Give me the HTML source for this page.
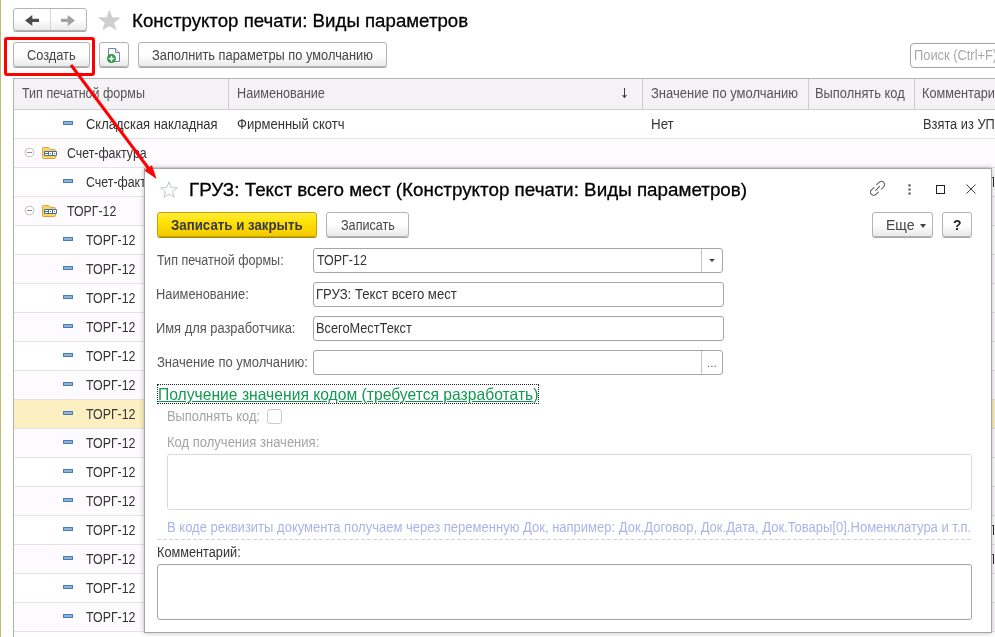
<!DOCTYPE html>
<html lang="ru"><head><meta charset="utf-8"><title>Конструктор печати: Виды параметров</title>
<style>
*{box-sizing:border-box;margin:0;padding:0}
html,body{width:995px;height:637px;overflow:hidden;background:#fff}
body{position:relative;font-family:"Liberation Sans",sans-serif;font-size:14px;color:#333}
.abs{position:absolute}
.btn{position:absolute;height:25px;border:1px solid #b3b3b3;border-radius:3px;background:linear-gradient(#fff 0%,#fff 50%,#eaeaea 100%);box-shadow:0 1px 0 #a9a9a9}
.t{position:absolute;white-space:nowrap;transform-origin:0 0}
.layer{position:absolute;left:0;top:0;width:995px;height:637px;will-change:transform}
.hl{position:absolute;height:1px;background:#e4e4e4;left:14px;width:981px}
.inp{position:absolute;height:25px;border:1px solid #a6a6a6;border-radius:3px;background:#fff}
.dash{position:absolute;width:10px;height:4px;background:#8db5dc;border:1px solid #4a7cb4;border-radius:0.5px}
</style></head><body>
<div class="abs" style="left:0;top:0;width:1px;height:637px;background:#c8b56c"></div>

<!-- nav -->
<div class="btn" style="left:13px;top:8px;width:74px;height:23px"></div>
<div class="abs" style="left:50px;top:9px;width:1px;height:21px;background:#d4d4d4"></div>
<svg class="abs" style="left:24px;top:13px" width="16" height="15" viewBox="0 0 16 15"><path d="M1 7.4 L8.3 1.9 L8.3 5.8 L15 5.8 L15 9 L8.3 9 L8.3 12.9 Z" fill="#4c4c4c"/></svg>
<svg class="abs" style="left:60px;top:13px" width="16" height="15" viewBox="0 0 16 15"><path d="M15 7.4 L7.7 1.9 L7.7 5.8 L1 5.8 L1 9 L7.7 9 L7.7 12.9 Z" fill="#a2a2a2"/></svg>
<svg class="abs" style="left:97px;top:8px" width="25" height="24" viewBox="0 0 25 24"><path d="M12.4 1.4 L15.3 9.3 L24 9.5 L17.1 14.7 L19.6 22.6 L12.4 18 L5.2 22.6 L7.7 14.7 L0.8 9.5 L9.5 9.3 Z" fill="#cfcfcf"/></svg>

<!-- toolbar -->
<div class="btn" style="left:13px;top:42px;width:77px"></div>
<div class="btn" style="left:99px;top:42px;width:30px"></div>
<svg class="abs" style="left:106px;top:46px" width="16" height="18" viewBox="0 0 16 18"><path d="M2.5 2.5 L9.5 2.5 L13.5 6.5 L13.5 15.5 L2.5 15.5 Z" fill="#fff" stroke="#6b86a6" stroke-width="1"/><path d="M9.5 2.5 L9.5 6.5 L13.5 6.5" fill="#e8eef5" stroke="#6b86a6" stroke-width="1"/><circle cx="5.5" cy="12.6" r="4.5" fill="#1f9a33"/><rect x="2.6" y="11.8" width="5.8" height="1.6" fill="#fff"/><rect x="4.7" y="9.7" width="1.6" height="5.8" fill="#fff"/></svg>
<div class="btn" style="left:138px;top:42px;width:249px"></div>
<div class="inp" style="left:910px;top:43px;width:100px;border-color:#a4a4a4;border-radius:4px"></div>

<!-- table -->
<div class="abs" style="left:13px;top:78px;width:982px;height:32px;background:#f5f2f5;border-top:1px solid #b4b4b4;border-bottom:1px solid #cfcfcf"></div>
<div class="abs" style="left:228px;top:79px;width:1px;height:30px;background:#cdcdcd"></div>
<div class="abs" style="left:642px;top:79px;width:1px;height:30px;background:#cdcdcd"></div>
<div class="abs" style="left:808px;top:79px;width:1px;height:30px;background:#cdcdcd"></div>
<div class="abs" style="left:914px;top:79px;width:1px;height:30px;background:#cdcdcd"></div>
<svg class="abs" style="left:620px;top:86px" width="10" height="14" viewBox="0 0 10 14"><path d="M4.5 2 L4.5 11" stroke="#3c3c3c" stroke-width="1" fill="none"/><path d="M1.7 8.8 L4.5 12.3 L7.3 8.8 L4.5 9.8 Z" fill="#3c3c3c"/></svg>
<div class="hl" style="top:138px"></div>
<div class="dash" style="left:63px;top:121px"></div>
<div class="abs" style="left:14px;top:139px;width:981px;height:28px;background:#fefbfe"></div>
<div class="hl" style="top:167px"></div>
<svg class="abs" style="left:24px;top:145px" width="36" height="14" viewBox="0 0 36 14"><circle cx="5.5" cy="7.5" r="4.3" fill="#fff" stroke="#c4c4c4" stroke-width="1.1"/><rect x="3" y="7" width="5" height="1" fill="#8c8c8c"/><path d="M18.5 3.5 Q18.5 2.5 19.5 2.5 L24.5 2.5 L26.5 4.5 L30.5 4.5 Q31.5 4.5 31.5 5.5 L31.5 12.5 Q31.5 13.5 30.5 13.5 L19.5 13.5 Q18.5 13.5 18.5 12.5 Z" fill="#fbd560" stroke="#dfa142" stroke-width="1"/><rect x="20" y="6" width="13" height="5" rx="1" fill="#44709d"/><rect x="21" y="7" width="3" height="1" fill="#fff"/><rect x="21" y="9" width="3" height="1" fill="#fff"/><rect x="25" y="7" width="3" height="3" fill="#fff"/><rect x="26" y="8" width="1" height="1" fill="#44709d"/><rect x="29" y="7" width="3" height="3" fill="#fff"/><rect x="30" y="8" width="1" height="1" fill="#44709d"/></svg>
<div class="hl" style="top:196px"></div>
<div class="dash" style="left:63px;top:179px"></div>
<div class="abs" style="left:14px;top:197px;width:981px;height:28px;background:#fefbfe"></div>
<div class="hl" style="top:225px"></div>
<svg class="abs" style="left:24px;top:203px" width="36" height="14" viewBox="0 0 36 14"><circle cx="5.5" cy="7.5" r="4.3" fill="#fff" stroke="#c4c4c4" stroke-width="1.1"/><rect x="3" y="7" width="5" height="1" fill="#8c8c8c"/><path d="M18.5 3.5 Q18.5 2.5 19.5 2.5 L24.5 2.5 L26.5 4.5 L30.5 4.5 Q31.5 4.5 31.5 5.5 L31.5 12.5 Q31.5 13.5 30.5 13.5 L19.5 13.5 Q18.5 13.5 18.5 12.5 Z" fill="#fbd560" stroke="#dfa142" stroke-width="1"/><rect x="20" y="6" width="13" height="5" rx="1" fill="#44709d"/><rect x="21" y="7" width="3" height="1" fill="#fff"/><rect x="21" y="9" width="3" height="1" fill="#fff"/><rect x="25" y="7" width="3" height="3" fill="#fff"/><rect x="26" y="8" width="1" height="1" fill="#44709d"/><rect x="29" y="7" width="3" height="3" fill="#fff"/><rect x="30" y="8" width="1" height="1" fill="#44709d"/></svg>
<div class="hl" style="top:254px"></div>
<div class="dash" style="left:63px;top:237px"></div>
<div class="abs" style="left:14px;top:255px;width:981px;height:28px;background:#fefbfe"></div>
<div class="hl" style="top:283px"></div>
<div class="dash" style="left:63px;top:266px"></div>
<div class="hl" style="top:312px"></div>
<div class="dash" style="left:63px;top:295px"></div>
<div class="abs" style="left:14px;top:313px;width:981px;height:28px;background:#fefbfe"></div>
<div class="hl" style="top:341px"></div>
<div class="dash" style="left:63px;top:324px"></div>
<div class="hl" style="top:370px"></div>
<div class="dash" style="left:63px;top:353px"></div>
<div class="abs" style="left:14px;top:371px;width:981px;height:28px;background:#fefbfe"></div>
<div class="hl" style="top:399px"></div>
<div class="dash" style="left:63px;top:382px"></div>
<div class="abs" style="left:14px;top:400px;width:981px;height:28px;background:#fcf0c3"></div>
<div class="hl" style="top:428px"></div>
<div class="dash" style="left:63px;top:411px"></div>
<div class="abs" style="left:14px;top:429px;width:981px;height:28px;background:#fefbfe"></div>
<div class="hl" style="top:457px"></div>
<div class="dash" style="left:63px;top:440px"></div>
<div class="hl" style="top:486px"></div>
<div class="dash" style="left:63px;top:469px"></div>
<div class="abs" style="left:14px;top:487px;width:981px;height:28px;background:#fefbfe"></div>
<div class="hl" style="top:515px"></div>
<div class="dash" style="left:63px;top:498px"></div>
<div class="hl" style="top:544px"></div>
<div class="dash" style="left:63px;top:527px"></div>
<div class="abs" style="left:14px;top:545px;width:981px;height:28px;background:#fefbfe"></div>
<div class="hl" style="top:573px"></div>
<div class="dash" style="left:63px;top:556px"></div>
<div class="hl" style="top:602px"></div>
<div class="dash" style="left:63px;top:585px"></div>
<div class="abs" style="left:14px;top:603px;width:981px;height:28px;background:#fefbfe"></div>
<div class="hl" style="top:631px"></div>
<div class="dash" style="left:63px;top:614px"></div>
<div class="hl" style="top:660px"></div>
<div class="dash" style="left:63px;top:643px"></div>
<div class="abs" style="left:13px;top:78px;width:1px;height:559px;background:#b0b0b0"></div>
<div class="layer">
<div class="t" id="t0" style="left:132.17px;top:8.92px;font-size:19px;line-height:23px;color:#000;transform:scaleX(0.9829);-webkit-text-stroke:0.3px #000;">Конструктор печати: Виды параметров</div>
<div class="t" id="t1" style="left:26.65px;top:46.65px;font-size:14px;line-height:17px;color:#454545;transform:scaleX(0.9146);">Создать</div>
<div class="t" id="t2" style="left:152.38px;top:46.65px;font-size:14px;line-height:17px;color:#454545;transform:scaleX(0.9170);">Заполнить параметры по умолчанию</div>
<div class="t" id="t3" style="left:914.16px;top:46.65px;font-size:14px;line-height:17px;color:#a8a8a8;transform:scaleX(0.9185);">Поиск (Ctrl+F)</div>
<div class="t" id="t4" style="left:22.22px;top:84.65px;font-size:14px;line-height:17px;color:#555555;transform:scaleX(0.8953);">Тип печатной формы</div>
<div class="t" id="t5" style="left:236.76px;top:84.65px;font-size:14px;line-height:17px;color:#555555;transform:scaleX(0.9046);">Наименование</div>
<div class="t" id="t6" style="left:651.17px;top:84.65px;font-size:14px;line-height:17px;color:#555555;transform:scaleX(0.9298);">Значение по умолчанию</div>
<div class="t" id="t7" style="left:815.34px;top:84.65px;font-size:14px;line-height:17px;color:#555555;transform:scaleX(0.9211);">Выполнять код</div>
<div class="t" id="t8" style="left:922.46px;top:84.65px;font-size:14px;line-height:17px;color:#555555;transform:scaleX(0.9063);">Комментарий</div>
<div class="t" id="t9" style="left:85.64px;top:115.65px;font-size:14px;line-height:17px;color:#333333;transform:scaleX(0.9249);">Складская накладная</div>
<div class="t" id="t10" style="left:67.07px;top:144.65px;font-size:14px;line-height:17px;color:#333333;transform:scaleX(0.8826);">Счет-фактура</div>
<div class="t" id="t11" style="left:85.67px;top:173.65px;font-size:14px;line-height:17px;color:#333333;transform:scaleX(0.8848);">Счет-фактура</div>
<div class="t" id="t12" style="left:67.42px;top:202.65px;font-size:14px;line-height:17px;color:#333333;transform:scaleX(0.8808);">ТОРГ-12</div>
<div class="t" id="t13" style="left:86.02px;top:231.65px;font-size:14px;line-height:17px;color:#333333;transform:scaleX(0.8844);">ТОРГ-12</div>
<div class="t" id="t14" style="left:86.02px;top:260.65px;font-size:14px;line-height:17px;color:#333333;transform:scaleX(0.8844);">ТОРГ-12</div>
<div class="t" id="t15" style="left:86.02px;top:289.65px;font-size:14px;line-height:17px;color:#333333;transform:scaleX(0.8844);">ТОРГ-12</div>
<div class="t" id="t16" style="left:86.02px;top:318.65px;font-size:14px;line-height:17px;color:#333333;transform:scaleX(0.8844);">ТОРГ-12</div>
<div class="t" id="t17" style="left:86.02px;top:347.65px;font-size:14px;line-height:17px;color:#333333;transform:scaleX(0.8844);">ТОРГ-12</div>
<div class="t" id="t18" style="left:86.02px;top:376.65px;font-size:14px;line-height:17px;color:#333333;transform:scaleX(0.8844);">ТОРГ-12</div>
<div class="t" id="t19" style="left:86.02px;top:405.65px;font-size:14px;line-height:17px;color:#333333;transform:scaleX(0.8844);">ТОРГ-12</div>
<div class="t" id="t20" style="left:86.02px;top:434.65px;font-size:14px;line-height:17px;color:#333333;transform:scaleX(0.8844);">ТОРГ-12</div>
<div class="t" id="t21" style="left:86.02px;top:463.65px;font-size:14px;line-height:17px;color:#333333;transform:scaleX(0.8844);">ТОРГ-12</div>
<div class="t" id="t22" style="left:86.02px;top:492.65px;font-size:14px;line-height:17px;color:#333333;transform:scaleX(0.8844);">ТОРГ-12</div>
<div class="t" id="t23" style="left:86.02px;top:521.65px;font-size:14px;line-height:17px;color:#333333;transform:scaleX(0.8844);">ТОРГ-12</div>
<div class="t" id="t24" style="left:86.02px;top:550.65px;font-size:14px;line-height:17px;color:#333333;transform:scaleX(0.8844);">ТОРГ-12</div>
<div class="t" id="t25" style="left:86.02px;top:579.65px;font-size:14px;line-height:17px;color:#333333;transform:scaleX(0.8844);">ТОРГ-12</div>
<div class="t" id="t26" style="left:86.02px;top:608.65px;font-size:14px;line-height:17px;color:#333333;transform:scaleX(0.8844);">ТОРГ-12</div>
<div class="t" id="t27" style="left:86.02px;top:637.65px;font-size:14px;line-height:17px;color:#333333;transform:scaleX(0.8844);">ТОРГ-12</div>
<div class="t" id="t28" style="left:237.05px;top:115.65px;font-size:14px;line-height:17px;color:#333333;transform:scaleX(0.9323);">Фирменный скотч</div>
<div class="t" id="t29" style="left:650.51px;top:115.65px;font-size:14px;line-height:17px;color:#333333;transform:scaleX(0.9530);">Нет</div>
<div class="t" id="t30" style="left:923.25px;top:115.65px;font-size:14px;line-height:17px;color:#333333;transform:scaleX(0.9159);">Взята из УП</div>
</div>

<!-- dialog -->
<div class="abs" style="left:144px;top:168px;width:848px;height:465px;background:#fff;border:1px solid #a6a6a6;box-shadow:0 0 5px rgba(0,0,0,.28)"></div>
<svg class="abs" style="left:159px;top:180px" width="20" height="19" viewBox="0 0 20 19"><path d="M10 1.8 L12.2 7.6 L18.3 7.8 L13.5 11.6 L15.2 17.4 L10 14 L4.8 17.4 L6.5 11.6 L1.7 7.8 L7.8 7.6 Z" fill="#fff" stroke="#c0c6cc" stroke-width="1" stroke-linejoin="miter"/></svg>

<div class="btn" style="left:157px;top:212px;width:160px;border-color:#c3a100;background:linear-gradient(#ffeb3c 0%,#ffe100 45%,#f3c900 100%);box-shadow:0 1px 0 #a98d00"></div>
<div class="btn" style="left:326px;top:212px;width:83px"></div>
<div class="btn" style="left:872px;top:212px;width:61px"></div>
<div class="abs" style="left:920px;top:224px;width:0;height:0;border-left:3.5px solid transparent;border-right:3.5px solid transparent;border-top:4px solid #444"></div>
<div class="btn" style="left:942px;top:212px;width:30px"></div>

<!-- window icons -->
<svg class="abs" style="left:868px;top:179px" width="112" height="20" viewBox="0 0 112 20">
<g transform="translate(9.6,9.4) rotate(-45)" fill="none" stroke="#626262" stroke-width="1.05" stroke-linecap="round"><path d="M2 -3.2 L5.4 -3.2 A3.2 3.2 0 0 1 5.4 3.2 L2 3.2"/><path d="M-2 -3.2 L-5.4 -3.2 A3.2 3.2 0 0 0 -5.4 3.2 L-2 3.2"/><path d="M-2.9 0 L2.9 0"/></g>
<circle cx="41.5" cy="6.4" r="1.35" fill="#737373"/><circle cx="41.5" cy="10.5" r="1.35" fill="#737373"/><circle cx="41.5" cy="14.6" r="1.35" fill="#737373"/>
<rect x="68.5" y="6.5" width="8" height="8" fill="none" stroke="#222" stroke-width="1"/>
<path d="M98.5 5.5 L107.5 14.5 M107.5 5.5 L98.5 14.5" stroke="#3c3c3c" stroke-width="1"/>
</svg>

<div class="inp" style="left:313px;top:248px;width:410px"></div>
<div class="abs" style="left:701px;top:249px;width:1px;height:23px;background:#c4c4c4"></div>
<div class="abs" style="left:708.5px;top:258.5px;width:0;height:0;border-left:3px solid transparent;border-right:3px solid transparent;border-top:3px solid #444"></div>
<div class="inp" style="left:313px;top:282px;width:411px"></div>
<div class="inp" style="left:313px;top:316px;width:411px"></div>
<div class="inp" style="left:313px;top:350px;width:410px"></div>
<div class="abs" style="left:701px;top:351px;width:1px;height:23px;background:#c4c4c4"></div>

<div class="abs" style="left:157px;top:384px;width:382px;height:20px;border:1px dotted #222"></div>
<div class="abs" style="left:267px;top:409px;width:15px;height:15px;border:1px solid #c9c9c9;border-radius:3px;background:#fff"></div>
<div class="inp" style="left:167px;top:454px;width:805px;height:56px;border-color:#d9d9d9"></div>
<div class="abs" style="left:157px;top:539px;width:815px;height:1px;background:repeating-linear-gradient(90deg,#d4d4d4 0,#d4d4d4 4px,transparent 4px,transparent 6px)"></div>
<div class="inp" style="left:157px;top:564px;width:815px;height:56px"></div>
<div class="layer">
<div class="t" id="t31" style="left:188.76px;top:177.92px;font-size:19px;line-height:23px;color:#000;transform:scaleX(0.9906);-webkit-text-stroke:0.3px #000;">ГРУЗ: Текст всего мест (Конструктор печати: Виды параметров)</div>
<div class="t" id="t32" style="left:171.00px;top:216.65px;font-size:14px;line-height:17px;color:#38394a;font-weight:bold;transform:scaleX(0.9481);">Записать и закрыть</div>
<div class="t" id="t33" style="left:340.59px;top:216.65px;font-size:14px;line-height:17px;color:#454545;transform:scaleX(0.9014);">Записать</div>
<div class="t" id="t34" style="left:885.55px;top:216.65px;font-size:14px;line-height:17px;color:#454545;transform:scaleX(0.9989);">Еще</div>
<div class="t" id="t35" style="left:952.86px;top:215.80px;font-size:15px;line-height:18px;color:#222;font-weight:bold;transform:scaleX(0.9319);">?</div>
<div class="t" id="t36" style="left:157.22px;top:251.65px;font-size:14px;line-height:17px;color:#555555;transform:scaleX(0.8967);">Тип печатной формы:</div>
<div class="t" id="t37" style="left:317.22px;top:251.65px;font-size:14px;line-height:17px;color:#333333;transform:scaleX(0.8917);">ТОРГ-12</div>
<div class="t" id="t38" style="left:156.45px;top:285.65px;font-size:14px;line-height:17px;color:#555555;transform:scaleX(0.9185);">Наименование:</div>
<div class="t" id="t39" style="left:316.42px;top:285.65px;font-size:14px;line-height:17px;color:#333333;transform:scaleX(0.9391);">ГРУЗ: Текст всего мест</div>
<div class="t" id="t40" style="left:156.44px;top:319.65px;font-size:14px;line-height:17px;color:#555555;transform:scaleX(0.9203);">Имя для разработчика:</div>
<div class="t" id="t41" style="left:316.45px;top:319.65px;font-size:14px;line-height:17px;color:#333333;transform:scaleX(0.9122);">ВсегоМестТекст</div>
<div class="t" id="t42" style="left:157.07px;top:353.65px;font-size:14px;line-height:17px;color:#555555;transform:scaleX(0.9312);">Значение по умолчанию:</div>
<div class="t" id="t43" style="left:707.13px;top:357.19px;font-size:11px;line-height:13px;color:#555;transform:scaleX(1.0610);">...</div>
<div class="t" id="t44" style="left:157.53px;top:384.28px;font-size:16.5px;line-height:20px;color:#119a4f;transform:scaleX(0.9492);text-decoration:underline;">Получение значения кодом (требуется разработать)</div>
<div class="t" id="t45" style="left:167.15px;top:407.65px;font-size:14px;line-height:17px;color:#a4a4a4;transform:scaleX(0.9178);">Выполнять код:</div>
<div class="t" id="t46" style="left:166.93px;top:433.65px;font-size:14px;line-height:17px;color:#a4a4a4;transform:scaleX(0.9297);">Код получения значения:</div>
<div class="t" id="t47" style="left:167.03px;top:518.65px;font-size:14px;line-height:17px;color:#adb3e8;transform:scaleX(0.9295);">В коде реквизиты документа получаем через переменную Док, например: Док.Договор, Док.Дата, Док.Товары[0].Номенклатура и т.п.</div>
<div class="t" id="t48" style="left:156.76px;top:543.65px;font-size:14px;line-height:17px;color:#333;transform:scaleX(0.9091);">Комментарий:</div>
</div>

<div class="abs" style="left:993px;top:177px;width:1px;height:10px;background:#2a2a2a"></div><div class="abs" style="left:992px;top:177px;width:1px;height:1px;background:#555"></div><div class="abs" style="left:993px;top:525px;width:1px;height:10px;background:#2a2a2a"></div><div class="abs" style="left:992px;top:525px;width:1px;height:1px;background:#555"></div><div class="abs" style="left:993px;top:554px;width:1px;height:10px;background:#2a2a2a"></div><div class="abs" style="left:992px;top:554px;width:1px;height:1px;background:#555"></div>
<!-- annotation -->
<svg class="abs" style="left:0;top:0" width="995" height="637" viewBox="0 0 995 637">
<rect x="5.5" y="38.5" width="88" height="36" rx="1.5" fill="none" stroke="#ff0000" stroke-width="3"/>
<line x1="71" y1="65" x2="149" y2="169" stroke="#ff0000" stroke-width="3"/>
<polygon points="156.6,179.1 144.3,170.6 152,165.3" fill="#ff0000"/>
</svg>
</body></html>
